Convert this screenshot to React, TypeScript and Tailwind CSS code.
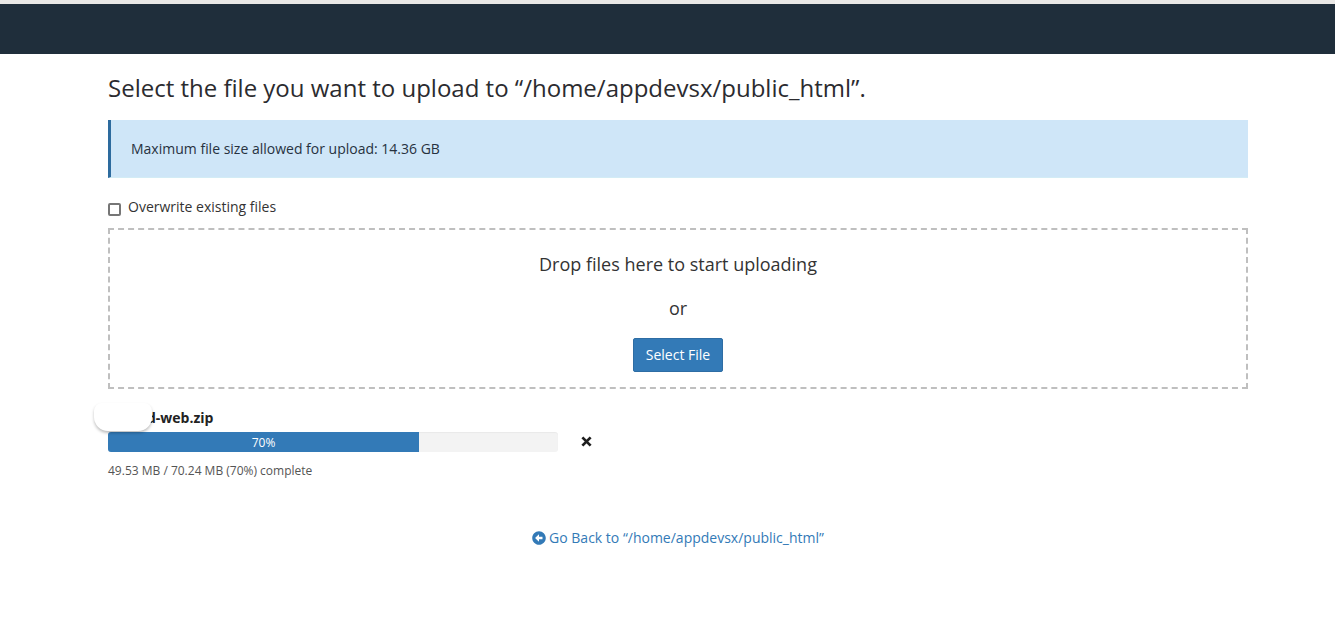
import React from 'react';

function BackIcon() {
  return (
    <svg viewBox="0 0 512 512" className="w-[14px] h-[14px] fill-[#337ab7]">
      <path d="M256 504C119 504 8 393 8 256S119 8 256 8s248 111 248 248-111 248-248 248zm116-292H256v-70.9c0-10.7-13-16.1-20.5-8.5L121.2 247.5c-4.7 4.7-4.7 12.2 0 16.9l114.3 114.9c7.6 7.6 20.5 2.2 20.5-8.5V300h116c6.6 0 12-5.4 12-12v-64c0-6.6-5.4-12-12-12z" />
    </svg>
  );
}

function CloseIcon() {
  return (
    <svg viewBox="0 0 12 12" className="w-[11px] h-[11px] stroke-[#1f1f1f]" strokeWidth="3" fill="none">
      <path d="M1.5 1.5L10.5 10.5M10.5 1.5L1.5 10.5" />
    </svg>
  );
}

export default function App() {
  return (
    <div className="min-h-[617px] bg-white font-['Open_Sans',sans-serif] text-[#293a4a] overflow-hidden">
      <div className="h-[4px] bg-[#e9e8e6]" />
      <div className="h-[50px] bg-[#1f2e3b]" />

      <main className="mx-[108px] w-[1140px]">
        <h1 className="mt-[16px] h-[35px] text-[24px] leading-[35px] text-[#2b2b2f] whitespace-nowrap">
          Select the file you want to upload to “/home/appdevsx/public_html”.
        </h1>

        <div className="mt-[15px] h-[58px] flex items-center pl-[20px] pb-[1px] bg-[#cfe6f8] border-l-[3px] border-b border-b-[#d3ecf5] border-l-[#2d6b9e] text-[14px] text-[#27323f]">
          Maximum file size allowed for upload: 14.36 GB
        </div>

        <label className="mt-[18px] h-[20px] flex items-center text-[14px] text-[#333333]">
          <span className="mt-[6px] w-[13px] h-[13px] rounded-[2px] border-2 border-[#767676] bg-white" />
          <span className="ml-[7px]">Overwrite existing files</span>
        </label>

        <div className="mt-[12px] h-[161px] border-2 border-dashed border-[#bfbfbf] flex flex-col items-center text-[#333333]">
          <div className="mt-[21px] h-[26px] text-[18px] leading-[26px]">Drop files here to start uploading</div>
          <div className="mt-[18px] h-[26px] text-[18px] leading-[26px]">or</div>
          <button className="mt-[17px] w-[90px] h-[34px] pb-[2px] rounded-[2px] bg-[#337ab7] border border-[#2e6da4] text-white text-[14px]">
            Select File
          </button>
        </div>

        <div className="relative mt-[18px]">
          <div className="h-[24px] pl-[39px] text-[14px] leading-[22px] font-bold text-[#222222]">d-web.zip</div>
          <div className="absolute left-[-14px] top-[-4px] w-[58px] h-[28px] rounded-b-[14px] rounded-t-[8px] bg-white shadow-[0_2px_3px_rgba(0,0,0,0.25)]" />
          <div className="mt-[1px] flex items-center">
            <div className="w-[450px] h-[20px] rounded-[3px] bg-[#f3f3f3] overflow-hidden shadow-[inset_0_1px_1px_rgba(0,0,0,0.04)]">
              <div className="w-[311px] h-full bg-[#337ab7] text-white text-[12px] leading-[21px] text-center">70%</div>
            </div>
            <span className="ml-[23px] mb-[2px] flex"><CloseIcon /></span>
          </div>
          <div className="mt-[10px] h-[18px] text-[12px] leading-[18px] text-[#555555]">49.53 MB / 70.24 MB (70%) complete</div>
        </div>

        <div className="mt-[47px] flex items-center justify-center gap-[3px] text-[14px] text-[#337ab7]">
          <BackIcon />
          <span>Go Back to “/home/appdevsx/public_html”</span>
        </div>
      </main>
    </div>
  );
}
